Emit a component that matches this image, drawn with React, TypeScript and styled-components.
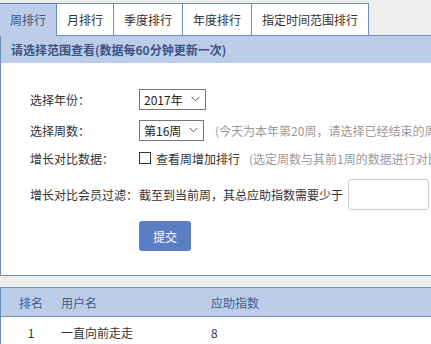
import styled, { createGlobalStyle } from "styled-components";

const GlobalStyle = createGlobalStyle`
  html, body {
    margin: 0;
    padding: 0;
    background: #eeeeee;
    overflow: hidden;
  }
  body {
    font-family: "Noto Sans CJK SC", "Noto Sans", sans-serif;
    font-size: 12px;
    color: #333;
  }
`;

const Page = styled.div`
  width: 640px;
  padding-top: 3px;
`;

const TabBar = styled.ul`
  display: flex;
  align-items: flex-start;
  height: 32px;
  margin: 0;
  padding: 0;
  list-style: none;
  position: relative;
  z-index: 1;
`;

const Tab = styled.li<{ $active?: boolean }>`
  box-sizing: border-box;
  height: ${(p) => (p.$active ? 33 : 32)}px;
  padding: 0 10px;
  line-height: 31px;
  white-space: nowrap;
  border-top: 1px solid ${(p) => (p.$active ? "#5b7dc4" : "#6b8fb8")};
  border-right: 1px solid #6b8fb8;
  background: ${(p) => (p.$active ? "#bccdea" : "#fff")};
  color: ${(p) => (p.$active ? "#3e5680" : "#333")};
  cursor: pointer;
`;

const Panel = styled.div`
  border: 1px solid #6b8fb8;
  background: #fff;
`;

const PanelHead = styled.div`
  height: 27px;
  line-height: 27px;
  padding-left: 10px;
  background: #bccdea;
  color: #3e5280;
  font-weight: bold;
`;

const Form = styled.div`
  padding: 25px 0 24px 29px;
`;

const Row = styled.div<{ $h: number; $gap: number }>`
  display: flex;
  align-items: center;
  height: ${(p) => p.$h}px;
  margin-top: ${(p) => p.$gap}px;
  white-space: nowrap;
`;

const Label = styled.span`
  width: 109px;
  flex: none;
`;

const SelectBox = styled.div<{ $w: number }>`
  box-sizing: border-box;
  display: flex;
  align-items: center;
  justify-content: space-between;
  width: ${(p) => p.$w}px;
  height: 21px;
  padding: 0 5px 0 4px;
  border: 1px solid #767676;
  color: #222;
  cursor: pointer;
`;

const Hint = styled.span<{ $ml: number }>`
  margin-left: ${(p) => p.$ml}px;
  color: #9a9a9a;
`;

const Check = styled.span`
  box-sizing: border-box;
  width: 12px;
  height: 12px;
  margin-right: 5px;
  border: 1px solid #333;
  background: #fff;
`;

const TextInput = styled.input`
  box-sizing: border-box;
  width: 81px;
  height: 31px;
  margin-left: 5px;
  border: 1px solid #cccccc;
  border-radius: 3px;
  outline: none;
`;

const Submit = styled.button`
  display: block;
  width: 52px;
  height: 30px;
  margin: 11px 0 0 109px;
  padding: 0;
  border: none;
  border-radius: 3px;
  background: #5b7dc4;
  color: #fff;
  font-family: inherit;
  font-size: 12px;
  cursor: pointer;
`;

const Table = styled.table`
  width: 640px;
  margin-top: 11px;
  border-collapse: collapse;
  background: #fff;
  border-top: 1px solid #6b8fb8;
  border-left: 1px solid #6b8fb8;
`;

const Th = styled.th<{ $w?: number; $center?: boolean }>`
  height: 28px;
  padding: 0;
  width: ${(p) => (p.$w ? `${p.$w}px` : "auto")};
  text-align: ${(p) => (p.$center ? "center" : "left")};
  font-weight: normal;
  color: #44598a;
  background: #bccdea;
  border-bottom: 1px solid #6b8fb8;
`;

const Td = styled.td<{ $center?: boolean }>`
  height: 30px;
  padding: 0;
  text-align: ${(p) => (p.$center ? "center" : "left")};
  color: #333;
`;

const Chevron = () => (
  <svg width="9" height="6" viewBox="0 0 9 6" fill="none">
    <path d="M0.5 0.8 L4.5 4.8 L8.5 0.8" stroke="#555" strokeWidth="1" />
  </svg>
);

const tabs = ["周排行", "月排行", "季度排行", "年度排行", "指定时间范围排行"];

export default function App() {
  return (
    <Page>
      <GlobalStyle />
      <TabBar>
        {tabs.map((t, i) => (
          <Tab key={t} $active={i === 0}>
            {t}
          </Tab>
        ))}
      </TabBar>
      <Panel>
        <PanelHead>请选择范围查看(数据每60分钟更新一次)</PanelHead>
        <Form>
          <Row $h={22} $gap={0}>
            <Label>选择年份：</Label>
            <SelectBox $w={67}>
              2017年 <Chevron />
            </SelectBox>
          </Row>
          <Row $h={22} $gap={9}>
            <Label>选择周数：</Label>
            <SelectBox $w={65}>
              第16周 <Chevron />
            </SelectBox>
            <Hint $ml={11}>(今天为本年第20周，请选择已经结束的周进行查看)</Hint>
          </Row>
          <Row $h={22} $gap={6}>
            <Label>增长对比数据：</Label>
            <Check />
            查看周增加排行
            <Hint $ml={9}>(选定周数与其前1周的数据进行对比)</Hint>
          </Row>
          <Row $h={31} $gap={10}>
            <Label>增长对比会员过滤：</Label>
            截至到当前周，其总应助指数需要少于
            <TextInput />
          </Row>
          <Submit>提交</Submit>
        </Form>
      </Panel>
      <Table>
        <thead>
          <tr>
            <Th $w={60} $center>
              排名
            </Th>
            <Th $w={150}>用户名</Th>
            <Th>应助指数</Th>
          </tr>
        </thead>
        <tbody>
          <tr>
            <Td $center>1</Td>
            <Td>一直向前走走</Td>
            <Td>8</Td>
          </tr>
        </tbody>
      </Table>
    </Page>
  );
}
